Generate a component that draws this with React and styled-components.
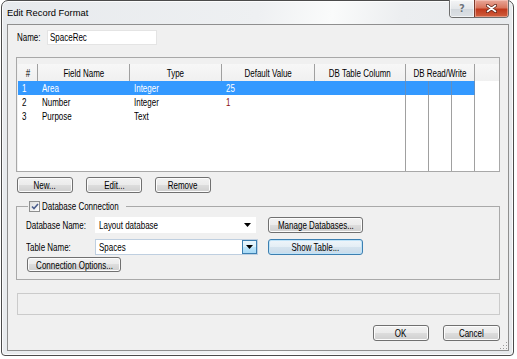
import React from "react";
import styled, { createGlobalStyle, css } from "styled-components";

const SANS = `"Liberation Sans", Arial, sans-serif`;
const COLS = "20px 92px 92px 93px 91px 23px 23px 23px 1fr";

const GlobalStyle = createGlobalStyle`
  html, body {
    margin: 0;
    padding: 0;
    background: #ffffff;
  }
  body {
    font-family: ${SANS};
    font-size: 10px;
    color: #000;
  }
  * {
    box-sizing: border-box;
  }
`;

/* the dialog font is a narrow bitmap face; squeeze Liberation Sans to its widths */
const T = styled.span`
  display: inline-block;
  white-space: nowrap;
  font-size: 10.5px;
  transform: scaleX(0.76);
  transform-origin: ${(p) => (p.$center ? "50% 50%" : "0 50%")};
`;

const Window = styled.div`
  position: relative;
  margin-left: 1px;
  width: 513px;
  height: 356px;
  display: flex;
  flex-direction: column;
  border: 1px solid #4b4b4b;
  border-radius: 7px 7px 4px 4px;
  background: linear-gradient(
    100deg,
    #e7eaed 0%,
    #eef0f2 45%,
    #fafbfb 58%,
    #eceef0 70%,
    #e6e9ec 100%
  );
  box-shadow: inset 0 0 0 1px rgba(255, 255, 255, 0.8);
`;

const TitleBar = styled.div`
  height: 23px;
  display: flex;
  align-items: flex-start;
  padding: 0 4px 0 5px;
`;

const Title = styled.div`
  margin-top: 6px;
  font-size: 9.4px;
  line-height: 12px;
  color: #000;
`;

const CaptionButtons = styled.div`
  margin: -1px 0 0 auto;
  display: flex;
  height: 18px;
  border: 1px solid #6e6e6e;
  border-top: none;
  border-radius: 0 0 4px 4px;
  overflow: hidden;
`;

const HelpButton = styled.div`
  width: 24px;
  display: flex;
  align-items: center;
  justify-content: center;
  background: linear-gradient(#f4f5f6 0%, #e4e7ea 50%, #d2d7dc 51%, #dde1e5 100%);
  box-shadow: inset 0 0 0 1px rgba(255, 255, 255, 0.6);
  font-family: "DejaVu Sans", sans-serif;
  font-size: 10px;
  font-weight: bold;
  color: #6d747c;
  text-shadow: 0 0 1px #fff;
`;

const CloseButton = styled.div`
  width: 34px;
  display: flex;
  align-items: center;
  justify-content: center;
  border-left: 1px solid #7a3a2c;
  background: linear-gradient(#e9a89a 0%, #d9775f 45%, #c1391c 55%, #d0603f 100%);
  box-shadow: inset 0 0 0 1px rgba(255, 220, 210, 0.45);
`;

const Client = styled.div`
  position: relative;
  flex: 1;
  margin: 0 4px 4px 5px;
  border: 1px solid #8f8f8f;
  background: #f0f0f0;
  display: flex;
  flex-direction: column;
`;

const NameRow = styled.div`
  display: flex;
  align-items: center;
  height: 15px;
  margin: 5px 0 0 9px;
`;

const Label = styled.span`
  width: ${(p) => p.$w}px;
  flex-shrink: 0;
  line-height: 16px;
  overflow: visible;
`;

const TextBox = styled.div`
  width: 110px;
  height: 15px;
  padding-left: 2px;
  background: #fff;
  border: 1px solid #e4e4e4;
  line-height: 13px;
`;

const ListBox = styled.div`
  margin: 12px 0 0 8px;
  width: 484px;
  height: 115px;
  padding: 6px 0 0 1px;
  border: 1px solid #a8a8a8;
  background: #f0f0f0;
  display: flex;
  flex-direction: column;
`;

const HeaderRow = styled.div`
  display: grid;
  grid-template-columns: ${COLS};
  height: 17px;
  background: linear-gradient(#f7f7f7, #f0f0f0);
`;

const HeaderCell = styled.div`
  grid-column: span ${(p) => p.$span || 1};
  display: flex;
  align-items: center;
  justify-content: center;
  border-right: ${(p) => (p.$last ? "none" : "1px solid #a0a0a0")};
`;

const ListBody = styled.div`
  flex: 1;
  display: flex;
  flex-direction: column;
  background: #fff;
`;

const Row = styled.div`
  display: grid;
  grid-template-columns: ${COLS};
  height: 14px;
  flex-shrink: 0;
`;

const FillRow = styled(Row)`
  flex: 1;
  height: auto;
`;

const Cell = styled.div`
  padding-left: 4px;
  line-height: 14px;
  overflow: hidden;
  color: ${(p) => (p.$sel ? "#fff" : p.$color || "#000")};
  background: ${(p) => (p.$sel ? "#3399ff" : "transparent")};
  ${(p) =>
    p.$grid &&
    css`
      border-right: 1px solid ${p.$sel ? "#5f8fc4" : "#a0a0a0"};
    `}
`;

const ButtonRow = styled.div`
  display: flex;
  gap: ${(p) => p.$gap}px;
  margin: ${(p) => p.$m};
  justify-content: ${(p) => p.$justify || "flex-start"};
`;

const Button = styled.button`
  width: ${(p) => p.$w}px;
  height: ${(p) => p.$h || 16}px;
  padding: 0;
  display: flex;
  align-items: center;
  justify-content: center;
  font-family: ${SANS};
  color: #000;
  border: 1px solid #707070;
  border-radius: 3px;
  background: linear-gradient(#f2f2f2 0%, #ebebeb 49%, #dddddd 50%, #cfcfcf 100%);
  box-shadow: inset 0 0 0 1px #fcfcfc;
  ${(p) =>
    p.$focus &&
    css`
      border-color: #3c7fb1;
      background: linear-gradient(#eef5fa 0%, #e4eef5 49%, #d5e3ee 50%, #c9dbea 100%);
      box-shadow: inset 0 0 0 1px #bfe3f8;
    `}
`;

const Group = styled.fieldset`
  margin: 7px 0 0 8px;
  width: 484px;
  min-width: 0;
  padding: 5px 0 7px 9px;
  border: 1px solid #a9a9a9;
`;

const Legend = styled.legend`
  margin-left: 2px;
  padding: 0 0 0 1px;
  width: 98px;
  height: 12px;
  display: flex;
  align-items: center;
  gap: 2px;
  line-height: 12px;
`;

const CheckBox = styled.span`
  width: 11px;
  height: 11px;
  flex-shrink: 0;
  display: flex;
  align-items: center;
  justify-content: center;
  border: 1px solid #8e8f8f;
  background: linear-gradient(135deg, #dcdcdc, #ffffff);
`;

const GroupGrid = styled.div`
  display: grid;
  grid-template-columns: 69px 173px 95px;
  grid-auto-rows: 16px;
  row-gap: 6px;
  align-items: center;
`;

const Combo = styled.div`
  width: ${(p) => p.$w}px;
  height: 16px;
  display: flex;
  align-items: center;
  background: #fff;
  border: 1px solid ${(p) => (p.$edged ? "#bfcfe0" : "#fff")};
  padding-left: 3px;
`;

const ComboText = styled.span`
  flex: 1;
  line-height: 14px;
`;

const ComboArrow = styled.span`
  width: 15px;
  height: 100%;
  display: flex;
  align-items: center;
  justify-content: center;
  ${(p) =>
    p.$button &&
    css`
      border: 1px solid #3c7fb1;
      background: linear-gradient(#eaf6fd 0%, #d9f0fc 49%, #bee6fd 50%, #a7d9f5 100%);
    `}
`;

const StatusBox = styled.div`
  margin: 13px 0 0 9px;
  width: 483px;
  height: 22px;
  border: 1px solid #cbcbcb;
`;

const Grip = styled.div`
  position: absolute;
  right: 1px;
  bottom: 1px;
  width: 8px;
  height: 8px;
  background: radial-gradient(circle, #9a9a9a 0.7px, transparent 1px) 0 0 / 3px 3px;
  clip-path: polygon(100% 0, 100% 100%, 0 100%);
`;

const Arrow = () => (
  <svg width="7" height="4" viewBox="0 0 7 4">
    <path d="M0 0h7L3.5 4z" fill="#000" />
  </svg>
);

const rows = [
  { n: "1", name: "Area", type: "Integer", def: "25", sel: true },
  { n: "2", name: "Number", type: "Integer", def: "1" },
  { n: "3", name: "Purpose", type: "Text", def: "" },
];

export default function App() {
  return (
    <>
      <GlobalStyle />
      <Window>
        <TitleBar>
          <Title>Edit Record Format</Title>
          <CaptionButtons>
            <HelpButton>?</HelpButton>
            <CloseButton>
              <svg width="11" height="9" viewBox="0 0 11 9">
                <path d="M1.5 1.5l8 6M9.5 1.5l-8 6" stroke="#5b2216" strokeWidth="3.2" strokeLinecap="round" />
                <path d="M1.5 1.5l8 6M9.5 1.5l-8 6" stroke="#fff" strokeWidth="1.6" strokeLinecap="round" />
              </svg>
            </CloseButton>
          </CaptionButtons>
        </TitleBar>
        <Client>
          <NameRow>
            <Label $w={30}>
              <T>Name:</T>
            </Label>
            <TextBox>
              <T>SpaceRec</T>
            </TextBox>
          </NameRow>

          <ListBox>
            <HeaderRow>
              <HeaderCell><T $center>#</T></HeaderCell>
              <HeaderCell><T $center>Field Name</T></HeaderCell>
              <HeaderCell><T $center>Type</T></HeaderCell>
              <HeaderCell><T $center>Default Value</T></HeaderCell>
              <HeaderCell><T $center>DB Table Column</T></HeaderCell>
              <HeaderCell $span={3}><T $center>DB Read/Write</T></HeaderCell>
              <HeaderCell $last />
            </HeaderRow>
            <ListBody>
              {rows.map((r) => (
                <Row key={r.n}>
                  <Cell $sel={r.sel}><T>{r.n}</T></Cell>
                  <Cell $sel={r.sel}><T>{r.name}</T></Cell>
                  <Cell $sel={r.sel}><T>{r.type}</T></Cell>
                  <Cell $sel={r.sel} $color="#8a1010"><T>{r.def}</T></Cell>
                  <Cell $sel={r.sel} $grid />
                  <Cell $sel={r.sel} $grid />
                  <Cell $sel={r.sel} $grid />
                  <Cell $sel={r.sel} $grid />
                  <Cell />
                </Row>
              ))}
              <FillRow>
                <Cell />
                <Cell />
                <Cell />
                <Cell />
                <Cell $grid />
                <Cell $grid />
                <Cell $grid />
                <Cell $grid />
                <Cell />
              </FillRow>
            </ListBody>
          </ListBox>

          <ButtonRow $gap={13} $m="5px 0 0 9px">
            <Button $w={56}><T $center>New...</T></Button>
            <Button $w={56}><T $center>Edit...</T></Button>
            <Button $w={56}><T $center>Remove</T></Button>
          </ButtonRow>

          <Group>
            <Legend>
              <CheckBox>
                <svg width="8" height="7" viewBox="0 0 8 7">
                  <path d="M1 3.5l2 2L7 1" stroke="#4a5d8c" strokeWidth="1.6" fill="none" />
                </svg>
              </CheckBox>
              <T>Database Connection</T>
            </Legend>
            <GroupGrid>
              <Label><T>Database Name:</T></Label>
              <Combo $w={161}>
                <ComboText><T>Layout database</T></ComboText>
                <ComboArrow>
                  <Arrow />
                </ComboArrow>
              </Combo>
              <Button $w={95}><T $center>Manage Databases...</T></Button>

              <Label><T>Table Name:</T></Label>
              <Combo $w={163} $edged>
                <ComboText><T>Spaces</T></ComboText>
                <ComboArrow $button>
                  <Arrow />
                </ComboArrow>
              </Combo>
              <Button $w={95} $focus><T $center>Show Table...</T></Button>
            </GroupGrid>
            <ButtonRow $gap={0} $m="2px 0 0 1px">
              <Button $w={94} $h={15}><T $center>Connection Options...</T></Button>
            </ButtonRow>
          </Group>

          <StatusBox />

          <ButtonRow $gap={14} $m="10px 8px 0 0" $justify="flex-end">
            <Button $w={56}><T $center>OK</T></Button>
            <Button $w={57}><T $center>Cancel</T></Button>
          </ButtonRow>
          <Grip />
        </Client>
      </Window>
    </>
  );
}
